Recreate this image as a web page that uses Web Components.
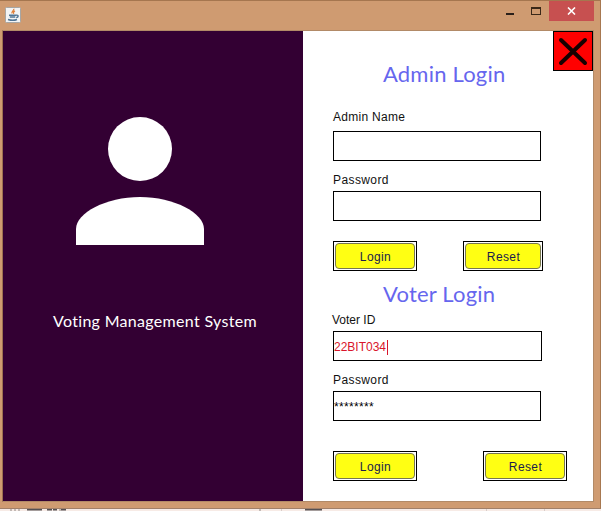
<!DOCTYPE html>
<html lang="en">
<head>
<meta charset="utf-8">
<title>Voting Management System</title>
<style>
html,body{margin:0;width:601px;height:511px;overflow:hidden;background:#f8ece6}
</style>
</head>
<body>
<app-window>
  <brand-panel>Voting Management System</brand-panel>
  <login-panel></login-panel>
</app-window>
<script>
const define = (name, html, setup) => customElements.define(name, class extends HTMLElement {
  connectedCallback() {
    if (this.shadowRoot) return;
    this.attachShadow({mode: 'open'}).innerHTML = html;
    if (setup) setup(this, this.shadowRoot);
  }
});

define('title-bar', `
<style>
:host{display:flex;height:30px;box-sizing:border-box;border-top:1px solid #a5764f;align-items:flex-start}
.icon{margin:6px 0 0 5px}
.space{flex:1}
.min{margin:12px 17px 0 0;width:8px;height:2px;background:#2b201a}
.max{margin:6px 8px 0 0;width:10px;height:8px;box-sizing:border-box;border:1px solid #3a2818;border-top-width:2px}
.close{width:45px;height:20px;background:#c75050;margin-right:6px;display:flex;align-items:center;justify-content:center}
svg{display:block}
</style>
<svg class="icon" width="16" height="16" viewBox="0 0 16 16">
<rect x=".5" y=".5" width="15" height="15" rx="1" fill="#f3f4f5" stroke="#a8a6a3"/>
<path d="M8.800 1.800c.6 2-2.800 2.500-1.700 4.600M10 3.800c-2.200 1-1.600 1.900-1.400 3" fill="none" stroke="#e0803a" stroke-width="1.300"/>
<path d="M4 8.300h7M4.800 10h5.500M3 12.500q5 1.600 9 0M11 8.300c3-.8 2.600 2.200.2 2.300" fill="none" stroke="#507596" stroke-width="1.400"/>
</svg>
<span class="space"></span><span class="min"></span><span class="max"></span>
<span class="close"><svg width="9" height="8" viewBox="0 0 9 8"><path d="M1 .5l7 7M8 .5l-7 7" stroke="#fff" stroke-width="1.600"/></svg></span>`);

define('app-window', `
<style>
:host{display:flex;flex-direction:column;width:601px;height:511px;background:#cf9b71}
.body{display:flex;height:470px;width:590px;margin:0 0 0 2px;border:1px solid #b28a67;border-left-color:#9b704f}
.frame{height:509px;box-sizing:border-box;border-right:1px solid #a77850;border-bottom:1px solid #a18069}
.under{display:flex;height:2px;background:#f7ebe6}
.under svg{display:block}
</style>
<div class="frame"><title-bar></title-bar><div class="body"><slot></slot></div></div>
<div class="under"><svg width="601" height="2"><path d="M11 0v2M15 0v2M19 0v2M60 0v2M260 0v2" stroke="#8e8884"/><path d="M27 .5h15M47 .5h5M53 .5h4M61 .5h5M305 .5h17" stroke="#555052" stroke-width="2"/><path d="M281.500 0v2M486.500 0v2M544.500 0v2" stroke="#d8cdc9"/></svg></div>`);

define('brand-panel', `
<style>
:host{display:flex;flex-direction:column;width:300px;height:470px;background:#330033;color:#fff;box-sizing:border-box;padding-top:86px}
svg{display:block;margin-left:73px}
.name{margin:65px 0 0 50px;font:16px/22px Lato,sans-serif;letter-spacing:.31px;white-space:nowrap}
</style>
<svg width="128" height="128" viewBox="0 0 128 128" fill="#fff"><circle cx="64" cy="32" r="32"/><path d="M0 128V112C0 96 30 80 64 80S128 96 128 112V128Z"/></svg>
<div class="name"><slot></slot></div>`);

define('text-field', `
<style>
:host{display:block;width:var(--w,208px)}
label{display:block;font:12px/16px "Liberation Sans",Arial,sans-serif;letter-spacing:var(--ls,.4px);color:#111;margin-left:var(--dx,0);white-space:nowrap}
.box{display:flex;align-items:center;box-sizing:border-box;height:30px;margin-top:var(--gap,3px);border:1px solid #000;background:#fff;padding-top:2px;font:12px/16px "Liberation Sans",Arial,sans-serif;letter-spacing:var(--vs,0)}
</style>
<label></label><div class="box"><slot></slot></div>`,
(host, root) => { root.querySelector('label').textContent = host.getAttribute('label'); });

define('form-button', `
<style>
:host{display:block;box-sizing:border-box;width:84px;height:30px;border:1px solid #000;background:#fff;padding:1px}
.face{display:flex;align-items:center;justify-content:center;box-sizing:border-box;height:26px;border:1px solid #77774f;border-radius:4px;background:#ffff13;color:#201b4d;font:12px/16px "Liberation Sans",Arial,sans-serif;letter-spacing:.4px;padding:1px 0 0 1px}
</style>
<div class="face"><slot></slot></div>`);

define('login-panel', `
<style>
:host{display:block;position:relative;box-sizing:border-box;width:290px;height:470px;background:#fff;padding:28px 0 0 30px}
h2{margin:0 0 0 50px;font:400 22px/30px Lato,sans-serif;color:#6666ee;letter-spacing:.2px;white-space:nowrap}
.row{display:flex;margin-top:20px}
.exit{position:absolute;right:0;top:0;width:40px;height:40px}
.exit svg{display:block}
.id{color:#d9152b}
.caret{width:1px;height:15px;margin-left:1px;background:#d9152b}
</style>
<h2>Admin Login</h2>
<text-field label="Admin Name" style="margin-top:20px;--gap:6px;--ls:.28px"></text-field>
<text-field label="Password" style="margin-top:11px"></text-field>
<div class="row" style="gap:46px"><form-button>Login</form-button><form-button style="width:80px">Reset</form-button></div>
<h2 style="margin-top:8px">Voter Login</h2>
<text-field label="Voter ID" style="margin-top:3px;--w:209px;--dx:-1px;--ls:0px"><span class="id">22BIT034</span><span class="caret"></span></text-field>
<text-field label="Password" style="margin-top:11px;--vs:.33px"><span>********</span></text-field>
<div class="row" style="margin-top:30px;gap:66px"><form-button>Login</form-button><form-button>Reset</form-button></div>
<div class="exit"><svg width="40" height="40"><rect x=".5" y=".5" width="39" height="39" fill="#f00" stroke="#000"/><path d="M8 9L32 32M32 9L8 32" stroke="#170000" stroke-width="4" stroke-linecap="round"/></svg></div>`);
</script>
</body>
</html>
